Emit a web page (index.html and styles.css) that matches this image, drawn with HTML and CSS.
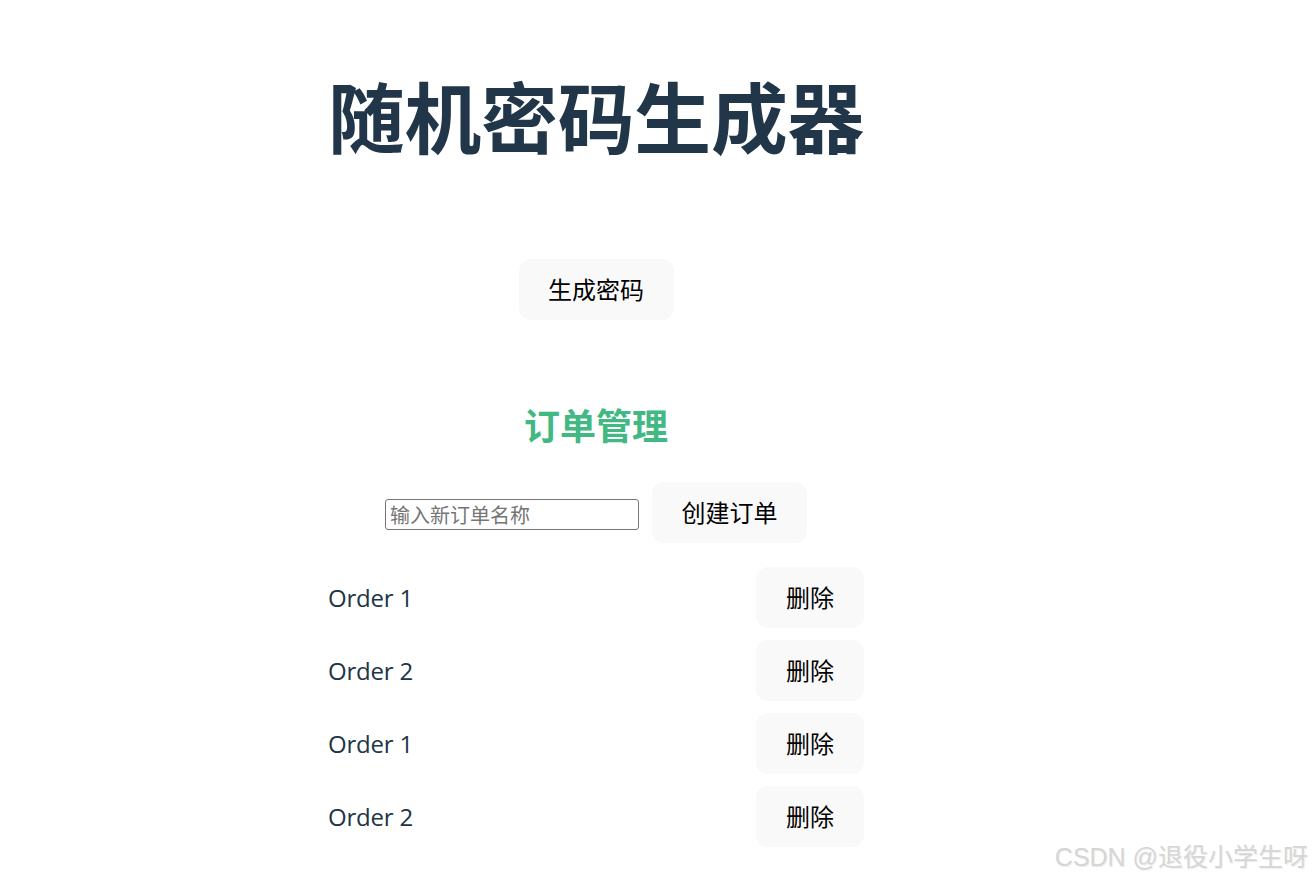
FILE: index.html
```html
<!DOCTYPE html>
<html lang="zh-CN">
<head>
<meta charset="utf-8">
<title>随机密码生成器</title>
<link rel="stylesheet" href="styles.css">
</head>
<body>
<div class="page">
  <main class="app">
    <h1 class="title">随机密码生成器</h1>
    <div class="gen-row">
      <button class="btn" type="button">生成密码</button>
    </div>
    <section class="orders">
      <h2 class="orders-title">订单管理</h2>
      <div class="create-row">
        <input class="order-input" type="text" placeholder="输入新订单名称">
        <button class="btn" type="button">创建订单</button>
      </div>
      <ul class="order-list">
        <li class="order-item"><span class="order-name">Order 1</span><button class="btn btn-del" type="button">删除</button></li>
        <li class="order-item"><span class="order-name">Order 2</span><button class="btn btn-del" type="button">删除</button></li>
        <li class="order-item"><span class="order-name">Order 1</span><button class="btn btn-del" type="button">删除</button></li>
        <li class="order-item"><span class="order-name">Order 2</span><button class="btn btn-del" type="button">删除</button></li>
      </ul>
    </section>
  </main>

  <div class="wm-layer" aria-hidden="true">
    <div class="wm-row"><span>mwb_yangwen</span><span>mwb_yangwen</span><span>mwb_yangwen</span><span>mwb_yangwen</span><span>mwb_yangwen</span><span>mwb_yangwen</span><span>mwb_yangwen</span></div>
    <div class="wm-row"><span>mwb_yangwen</span><span>mwb_yangwen</span><span>mwb_yangwen</span><span>mwb_yangwen</span><span>mwb_yangwen</span><span>mwb_yangwen</span><span>mwb_yangwen</span></div>
    <div class="wm-row"><span>mwb_yangwen</span><span>mwb_yangwen</span><span>mwb_yangwen</span><span>mwb_yangwen</span><span>mwb_yangwen</span><span>mwb_yangwen</span><span>mwb_yangwen</span></div>
    <div class="wm-row"><span>mwb_yangwen</span><span>mwb_yangwen</span><span>mwb_yangwen</span><span>mwb_yangwen</span><span>mwb_yangwen</span><span>mwb_yangwen</span><span>mwb_yangwen</span></div>
    <div class="wm-row"><span>mwb_yangwen</span><span>mwb_yangwen</span><span>mwb_yangwen</span><span>mwb_yangwen</span><span>mwb_yangwen</span><span>mwb_yangwen</span><span>mwb_yangwen</span></div>
    <div class="wm-row"><span>mwb_yangwen</span><span>mwb_yangwen</span><span>mwb_yangwen</span><span>mwb_yangwen</span><span>mwb_yangwen</span><span>mwb_yangwen</span><span>mwb_yangwen</span></div>
    <div class="wm-row"><span>mwb_yangwen</span><span>mwb_yangwen</span><span>mwb_yangwen</span><span>mwb_yangwen</span><span>mwb_yangwen</span><span>mwb_yangwen</span><span>mwb_yangwen</span></div>
    <div class="wm-row"><span>mwb_yangwen</span><span>mwb_yangwen</span><span>mwb_yangwen</span><span>mwb_yangwen</span><span>mwb_yangwen</span><span>mwb_yangwen</span><span>mwb_yangwen</span></div>
    <div class="wm-row"><span>mwb_yangwen</span><span>mwb_yangwen</span><span>mwb_yangwen</span><span>mwb_yangwen</span><span>mwb_yangwen</span><span>mwb_yangwen</span><span>mwb_yangwen</span></div>
    <div class="wm-row"><span>mwb_yangwen</span><span>mwb_yangwen</span><span>mwb_yangwen</span><span>mwb_yangwen</span><span>mwb_yangwen</span><span>mwb_yangwen</span><span>mwb_yangwen</span></div>
  </div>

  <div class="csdn-mark">CSDN @退役小学生呀</div>
</div>
</body>
</html>
```

FILE: styles.css
```css
* {
  box-sizing: border-box;
}

html, body {
  margin: 0;
  padding: 0;
  background: #ffffff;
}

body {
  font-family: "Open Sans", "Noto Sans CJK SC", sans-serif;
  color: #213547;
  font-size: 24px;
  line-height: 1.5;
}

.page {
  position: relative;
  width: 1312px;
  height: 879px;
  overflow: hidden;
}

.app {
  position: relative;
  z-index: 1;
  width: 536px;
  margin-left: 328px;
  padding-top: 73px;
  text-align: center;
}

.title {
  margin: 0 -20px;
  font-family: "Noto Sans CJK SC", sans-serif;
  font-size: 76.8px;
  font-weight: 700;
  line-height: 84.5px;
  color: #22364a;
  letter-spacing: -0.2px;
}

.gen-row {
  margin-top: 101.5px;
  display: flex;
  justify-content: center;
}

.btn {
  font-family: "Noto Sans CJK SC", sans-serif;
  font-size: 24px;
  line-height: 30.5px;
  padding: 14.4px 28.5px;
  border: 1px solid transparent;
  border-radius: 12px;
  background-color: #f9f9f9;
  color: #000000;
  cursor: pointer;
}

.orders-title {
  margin: 76.5px 0 0;
  font-family: "Noto Sans CJK SC", sans-serif;
  font-size: 36px;
  font-weight: 700;
  line-height: 54px;
  color: #42b883;
}

.create-row {
  margin-top: 31px;
  display: flex;
  justify-content: center;
  align-items: center;
  gap: 13px;
}

.order-input {
  width: 254px;
  height: 31px;
  margin-top: 4px;
  padding: 0 4px;
  border: 1px solid #767676;
  border-radius: 3px;
  font-family: "Noto Sans CJK SC", sans-serif;
  font-size: 20px;
  color: #000;
  background: #fff;
}

.order-input::placeholder {
  color: #757575;
}

.order-list {
  list-style: none;
  margin: 24px 0 0;
  padding: 0;
  display: flex;
  flex-direction: column;
  gap: 11.7px;
}

.order-item {
  display: flex;
  justify-content: space-between;
  align-items: center;
}

.order-name {
  font-family: "Open Sans", sans-serif;
  font-size: 24px;
  color: #213547;
  letter-spacing: -0.2px;
}

.btn-del {
  padding-left: 29px;
  padding-right: 29px;
}

.wm-layer {
  position: absolute;
  z-index: 0;
  left: 2px;
  top: -36px;
  right: 0;
  bottom: 0;
  pointer-events: none;
  font-family: "Open Sans", sans-serif;
  font-size: 24px;
  line-height: 90px;
  color: rgba(0, 0, 0, 0.022);
}

.wm-row {
  white-space: nowrap;
  height: 90px;
}

.wm-row span {
  display: inline-block;
  width: 178px;
}

.csdn-mark {
  position: absolute;
  z-index: 2;
  right: 4px;
  bottom: 7px;
  font-family: "Liberation Sans", "Noto Sans CJK SC", sans-serif;
  font-size: 25px;
  line-height: 30px;
  color: #d6d6d6;
  text-shadow: 1px 1px 1px rgba(0, 0, 0, 0.08);
  white-space: nowrap;
}
```
